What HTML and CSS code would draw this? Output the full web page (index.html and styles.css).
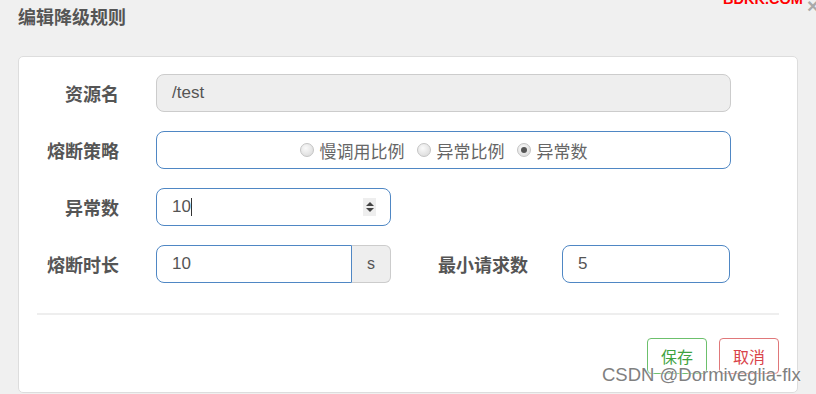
FILE: index.html
```html
<!DOCTYPE html>
<html lang="zh-CN">
<head>
    <meta charset="UTF-8">
    <meta name="viewport" content="width=device-width, initial-scale=1.0">
    <title>编辑降级规则</title>
    <link rel="stylesheet" href="styles.css">
</head>
<body>
    <div class="brand">BDKK.COM</div>
    <div class="close">&times;</div>
    <div class="dialog">
        <div class="dialog-title">编辑降级规则</div>
        <div class="card">
            <div class="form-row">
                <div class="label">资源名</div>
                <div class="field field-disabled field-wide">/test</div>
            </div>
            <div class="form-row">
                <div class="label">熔断策略</div>
                <div class="field field-active field-wide radio-group">
                    <span class="radio"><span class="radio-dot"></span>慢调用比例</span>
                    <span class="radio"><span class="radio-dot"></span>异常比例</span>
                    <span class="radio"><span class="radio-dot checked"></span>异常数</span>
                </div>
            </div>
            <div class="form-row">
                <div class="label">异常数</div>
                <div class="field field-active field-number">
                    <span>1</span><span class="caret">0</span>
                    <span class="spinner">
                        <svg width="10" height="14" viewBox="0 0 10 14">
                            <path d="M1 6 L5 2 L9 6 Z" fill="#444"/>
                            <path d="M1 8 L5 12 L9 8 Z" fill="#444"/>
                        </svg>
                    </span>
                </div>
            </div>
            <div class="form-row">
                <div class="label">熔断时长</div>
                <div class="input-group">
                    <div class="field field-active field-left">10</div>
                    <div class="addon">s</div>
                </div>
                <div class="label-inline">最小请求数</div>
                <div class="field field-active field-small">5</div>
            </div>
            <div class="divider"></div>
            <div class="actions">
                <button class="btn btn-save">保存</button>
                <button class="btn btn-cancel">取消</button>
            </div>
        </div>
    </div>
    <div class="watermark">CSDN @Dormiveglia-flx</div>
</body>
</html>
```

FILE: styles.css
```css
body {
    margin: 0;
    padding: 0;
    background: #f0f0f0;
    font-family: "Liberation Sans", "Noto Sans CJK SC", sans-serif;
    color: #555;
    overflow: hidden;
}

.brand {
    position: absolute;
    top: -9px;
    left: 723px;
    color: #f00;
    font-size: 14.5px;
    font-weight: bold;
}

.close {
    position: absolute;
    top: -5px;
    left: 807px;
    color: #aaa;
    font-size: 20px;
    font-weight: bold;
}

.dialog {
    padding: 6px 18px 0 18px;
}

.dialog-title {
    font-size: 18px;
    font-weight: bold;
    color: #555;
    height: 24px;
    line-height: 24px;
    margin-bottom: 26px;
}

.card {
    background: #fff;
    border: 1px solid #ddd;
    border-radius: 5px;
    padding: 17px 18px 20px 18px;
    height: 337px;
    box-sizing: border-box;
    width: 780px;
}

.form-row {
    display: flex;
    align-items: center;
    height: 38px;
    margin-bottom: 19px;
}

.label {
    width: 100px;
    margin-left: -18px;
    margin-right: 37px;
    text-align: right;
    font-size: 18px;
    font-weight: bold;
    color: #555;
}

.label-inline {
    margin-left: 47px;
    margin-right: 34px;
    font-size: 18px;
    font-weight: bold;
    color: #555;
}

.field {
    height: 38px;
    box-sizing: border-box;
    border: 1px solid #ccc;
    border-radius: 8px;
    padding: 0 15px;
    display: flex;
    align-items: center;
    font-size: 17px;
    color: #555;
    background: #fff;
}

.field-disabled {
    background: #eee;
}

.field-active {
    border-color: #4f87c4;
}

.field-wide {
    width: 575px;
}

.radio-group {
    justify-content: center;
    gap: 12px;
    padding-left: 0;
    padding-right: 0;
    color: #666;
}

.radio {
    display: flex;
    align-items: center;
    gap: 6px;
}

.radio-dot {
    width: 12px;
    height: 12px;
    border-radius: 50%;
    border: 1px solid #c4c4c4;
    background: radial-gradient(circle at 40% 35%, #fafafa, #d6d6d6);
    position: relative;
}

.radio-dot.checked::after {
    content: "";
    position: absolute;
    left: 3px;
    top: 3px;
    width: 6px;
    height: 6px;
    border-radius: 50%;
    background: #555;
}

.field-number {
    width: 235px;
}

.caret {
    border-right: 1px solid #333;
    margin-right: auto;
    line-height: 18px;
}

.spinner {
    width: 13px;
    height: 18px;
    background: #eee;
    display: flex;
    align-items: center;
    justify-content: center;
    margin-right: -1px;
}

.input-group {
    display: flex;
}

.field-left {
    width: 196px;
    border-radius: 8px 0 0 8px;
}

.addon {
    width: 39px;
    height: 38px;
    box-sizing: border-box;
    border: 1px solid #ccc;
    border-left: none;
    border-radius: 0 6px 6px 0;
    background: #eee;
    display: flex;
    align-items: center;
    justify-content: center;
    font-size: 16px;
    color: #555;
}

.field-small {
    width: 168px;
}

.divider {
    height: 2px;
    background: #eee;
    margin-top: 30px;
}

.actions {
    display: flex;
    justify-content: flex-end;
    gap: 12px;
    margin-top: 23px;
}

.btn {
    width: 60px;
    height: 36px;
    background: #fff;
    border-radius: 4px;
    font-family: "Liberation Sans", "Noto Sans CJK SC", sans-serif;
    font-size: 16px;
    padding: 0;
}

.btn-save {
    border: 1px solid #6cc06c;
    color: #3fa33f;
}

.btn-cancel {
    border: 1px solid #e0787a;
    color: #d9434a;
}

.watermark {
    position: absolute;
    left: 602px;
    top: 364px;
    font-size: 18.5px;
    color: #808080;
    text-shadow: 0 0 2px #fff, 0 0 2px #fff;
}
```
